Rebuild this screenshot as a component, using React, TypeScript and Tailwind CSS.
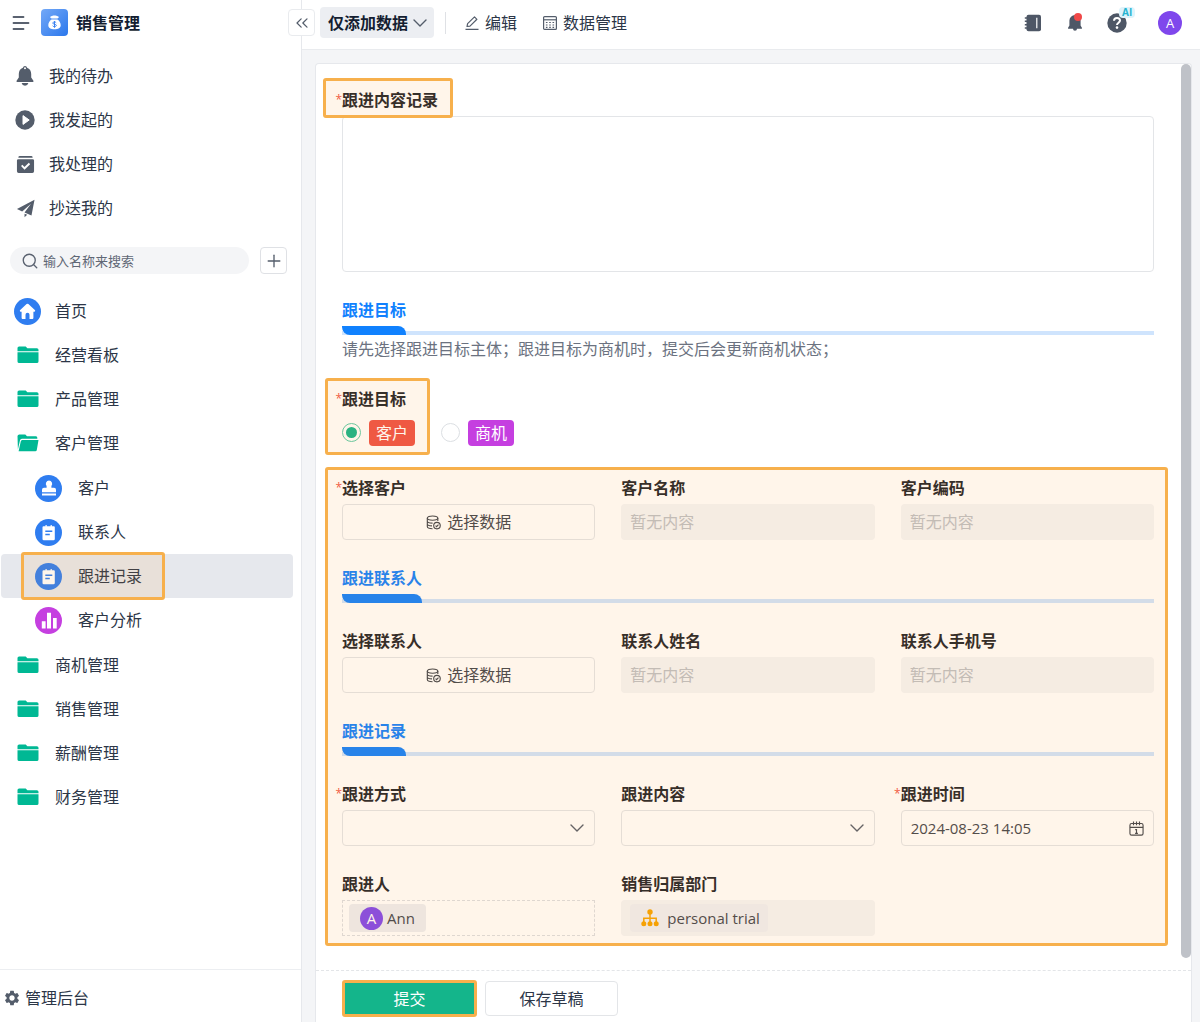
import type { ReactNode } from "react"
import { ChevronsLeft, Plus, Search } from "lucide-react"
import { MdSettings } from "react-icons/md"

type IconProps = { className?: string }

const BellIcon = ({ className }: IconProps) => (
    <svg viewBox="0 0 20 20" fill="currentColor" className={className}>
        <path fillRule="evenodd" d="M10 0a2.200 2.200 0 0 1 2.100 1.700C14.700 2.600 16.200 5 16.200 8v3.600l2.200 3.100c.4.6.1 1.200-.6 1.200H2.200c-.7 0-1-.6-.6-1.200l2.200-3.100V8c0-3 1.500-5.400 4.100-6.300A2.200 2.200 0 0 1 10 0Zm0 1.200a1 1 0 1 0 0 2 1 1 0 0 0 0-2Z" />
        <path d="M6.600 17h6.800a3.500 3.500 0 0 1-6.800 0Z" />
    </svg>
)

const PlayIcon = ({ className }: IconProps) => (
    <svg viewBox="0 0 20 20" className={className}>
        <circle cx="10" cy="10" r="9.7" fill="currentColor" />
        <path d="M8 5.600 14.200 10 8 14.400Z" fill="#fff" stroke="#fff" strokeLinejoin="round" />
    </svg>
)

const DoneIcon = ({ className }: IconProps) => (
    <svg viewBox="0 0 20 20" className={className}>
        <path d="M4 1h12a1.500 1.500 0 0 1 1.500 1.500V3h-15v-.5A1.500 1.500 0 0 1 4 1ZM2.500 4.400h15A1.500 1.500 0 0 1 19 5.900v11.300a1.800 1.800 0 0 1-1.800 1.800H2.800A1.800 1.800 0 0 1 1 17.200V5.900a1.500 1.500 0 0 1 1.500-1.500Z" fill="currentColor" />
        <path d="m6 11 3 3 5.200-5" fill="none" stroke="#fff" strokeWidth="2" />
    </svg>
)

const SendIcon = ({ className }: IconProps) => (
    <svg viewBox="0 0 20 20" fill="currentColor" className={className}>
        <path d="M19.500.8 1 10.600l5.500 2.600L15.800 5 9 14.200l7.300 3.100ZM9 15.400v3.800l2.800-2.600Z" />
    </svg>
)

const FolderIcon = ({ open }: { open?: boolean }) => (
    <svg viewBox="0 0 22 18" fill="#00b894" className="h-[18px] w-[22px]">
        {open ? (
            <path d="M.5 2A1.800 1.800 0 0 1 2.300.5h6l1.700 1.700h9a1.500 1.500 0 0 1 1.300 1.500v1H5a2 2 0 0 0-2 1.600L.9 15.500ZM5.200 5.900h16.300l-1.700 10a1.500 1.500 0 0 1-1.500 1.300H1.600l2.200-10a1.600 1.600 0 0 1 1.400-1.300Z" />
        ) : (
            <path d="M.5 2A1.600 1.600 0 0 1 2.100.4h6.600l1.700 1.800h9.500A1.600 1.600 0 0 1 21.500 3.800v1.400H.5ZM.5 6.200h21v9.200a1.700 1.700 0 0 1-1.700 1.700H2.200A1.700 1.700 0 0 1 .5 15.400Z" />
        )}
    </svg>
)

const HomeIcon = () => (
    <svg viewBox="0 0 27 27" className="size-[27px]">
        <circle cx="13.5" cy="13.5" r="13.5" fill="#2f7df0" />
        <path d="M12.600 6.100a1.400 1.400 0 0 1 1.800 0l6.400 6c.7.7.4 1.600-.5 1.600h-.9v6.100c0 .8-.5 1.300-1.300 1.300h-2.600v-4.300a2 2 0 0 0-4 0v4.300H8.900c-.8 0-1.300-.5-1.300-1.300v-6.100h-.9c-.9 0-1.200-.9-.5-1.600Z" fill="#fff" />
    </svg>
)

const StampIcon = () => (
    <svg viewBox="0 0 27 27" className="size-[27px]">
        <circle cx="13.5" cy="13.5" r="13.5" fill="#2f7df0" />
        <path d="M14 5.600a3.200 3.200 0 0 1 2.400 5.300v1.800h2.600a2 2 0 0 1 2 2v2.600H7v-2.600a2 2 0 0 1 2-2h2.600v-1.800A3.200 3.200 0 0 1 14 5.600ZM7 18.500h14v2H7Z" fill="#fff" />
    </svg>
)

const NoteIcon = () => (
    <svg viewBox="0 0 27 27" className="size-[27px]">
        <circle cx="13.5" cy="13.5" r="13.5" fill="#2f7df0" />
        <path d="M8.500 7.200h2V6h1.200v1.200h3.900V6h1.200v1.200h2a1 1 0 0 1 1 1V20a1.300 1.300 0 0 1-1.300 1.300H8.800A1.300 1.300 0 0 1 7.500 20V8.200a1 1 0 0 1 1-1Z" fill="#fff" />
        <path d="M10.300 12.300h7M10.300 15.500h4.500" stroke="#2f7df0" strokeWidth="1.5" />
    </svg>
)

const ChartIcon = () => (
    <svg viewBox="0 0 27 27" className="size-[27px]">
        <circle cx="13.5" cy="13.5" r="13.5" fill="#c53fe0" />
        <path d="M6.800 14.200h3.800v7.300H6.800ZM12 5.800h4v15.700h-4ZM18 11h3.700v10.500H18Z" fill="#fff" />
    </svg>
)

const DatabaseIcon = () => (
    <svg viewBox="0 0 16 16" fill="none" stroke="currentColor" strokeWidth="1.2" className="size-[15px]">
        <ellipse cx="7" cy="3.3" rx="5.6" ry="2.3" />
        <path d="M1.400 3.300v9c0 1.200 2.400 2.300 5.600 2.300M12.600 3.300v3.200M1.400 6.300c0 1.300 2.500 2.300 5.600 2.300M1.400 9.300c0 1.300 2.200 2.300 5 2.300" />
        <circle cx="11.7" cy="11.3" r="3.5" />
        <path d="m10.200 11.400 1.100 1.100 2-2.200" />
    </svg>
)

const OrgIcon = () => (
    <svg viewBox="0 0 18 18" className="size-[18px]" fill="#f5a300">
        <circle cx="9" cy="3" r="2.7" />
        <circle cx="2.8" cy="14.8" r="2.5" />
        <circle cx="9" cy="14.8" r="2.5" />
        <circle cx="15.2" cy="14.8" r="2.5" />
        <path d="M9 3v11M2.800 14V9.300h12.400V14" fill="none" stroke="#f5a300" strokeWidth="1.5" />
    </svg>
)

const CalendarIcon = () => (
    <svg viewBox="0 0 16 16" fill="none" stroke="currentColor" strokeWidth="1.2" className="size-[15px] shrink-0">
        <rect x="1" y="2.6" width="14" height="12.4" rx="1.8" />
        <path d="M1 6.800h14M4.800.5v4M8 .5v4M11.200.5v4M6.600 9.200H8v4M6.500 13.200h3" />
    </svg>
)

const ArrowDown = ({ className = "" }: IconProps) => (
    <svg viewBox="0 0 14 8" fill="none" stroke="#545d6b" strokeWidth="1.4" strokeLinecap="round" strokeLinejoin="round" className={`h-2 w-[14px] ${className}`}>
        <path d="m1 1 6 6 6-6" />
    </svg>
)

// Tinted frame that points out one region of the form
const Highlight = ({ className = "" }: IconProps) => (
    <span aria-hidden="true" className={`pointer-events-none absolute z-10 rounded-[3px] border-[3px] border-[#f7b04c] bg-[#ff9b2d]/10 ${className}`} />
)

const shortcuts = [
    { name: "我的待办", icon: <BellIcon className="size-5" /> },
    { name: "我发起的", icon: <PlayIcon className="size-5" /> },
    { name: "我处理的", icon: <DoneIcon className="size-[19px]" /> },
    { name: "抄送我的", icon: <SendIcon className="size-[19px]" /> },
]

const children = [
    { name: "客户", icon: <StampIcon /> },
    { name: "联系人", icon: <NoteIcon /> },
    { name: "跟进记录", icon: <NoteIcon />, active: true },
    { name: "客户分析", icon: <ChartIcon /> },
]

const menu = [
    { name: "首页", icon: <HomeIcon /> },
    { name: "经营看板", icon: <FolderIcon /> },
    { name: "产品管理", icon: <FolderIcon /> },
    { name: "客户管理", icon: <FolderIcon open />, children },
    { name: "商机管理", icon: <FolderIcon /> },
    { name: "销售管理", icon: <FolderIcon /> },
    { name: "薪酬管理", icon: <FolderIcon /> },
    { name: "财务管理", icon: <FolderIcon /> },
]

function Sidebar() {
    return (
        <aside className="flex w-[302px] shrink-0 flex-col border-r border-[#e6e8ec] bg-white">
            <div className="flex h-[45px] items-center pl-3">
                <button aria-label="菜单" className="flex">
                    <svg viewBox="0 0 18 18" stroke="#5a6270" strokeWidth="1.8" strokeLinecap="round" className="size-[18px]">
                        <path d="M1.500 3h10M1.500 9h15M1.500 15h10" />
                    </svg>
                </button>
                <svg viewBox="0 0 27 27" className="ml-[11px] size-[27px]">
                    <defs>
                        <linearGradient id="logo" x1="0" y1="0" x2="1" y2="1">
                            <stop offset="0" stopColor="#74a9f7" />
                            <stop offset="1" stopColor="#2b77ec" />
                        </linearGradient>
                    </defs>
                    <rect width="27" height="27" rx="4" fill="url(#logo)" />
                    <path d="M10.200 7.200c1-.3 1.700-.8 3.300-.8s2.300.5 3.300.8c1 .3 1.200 1.300.4 1.900l-.9.500h-5.600l-.9-.5c-.8-.6-.6-1.600.4-1.900ZM10.600 10.500h5.800c2 1.200 3.300 3.500 3.300 5.700 0 2.800-2.500 4-6.200 4s-6.200-1.200-6.200-4c0-2.200 1.300-4.500 3.300-5.700Z" fill="#fff" />
                    <path d="M15.200 13.800c-.3-.6-.9-.8-1.700-.8-1 0-1.700.4-1.700 1.100 0 1.600 3.500.7 3.500 2.400 0 .8-.8 1.200-1.800 1.200-.9 0-1.600-.3-1.800-1M13.500 12v6.700" fill="none" stroke="#3b82f0" strokeWidth="1" />
                </svg>
                <h1 className="ml-2 font-bold text-[#141e31]">销售管理</h1>
            </div>
            <nav className="pt-[9px]">
                {shortcuts.map((s) => (
                    <a key={s.name} href="#" className="flex h-11 items-center pl-[15px]">
                        <span className="flex w-5 justify-center text-[#545d6b]">{s.icon}</span>
                        <span className="ml-[14px]">{s.name}</span>
                    </a>
                ))}
            </nav>
            <div className="mt-[17px] flex items-center gap-[11px] pr-[14px] pl-[10px]">
                <label className="flex h-[27px] flex-1 items-center gap-1 rounded-full bg-[#f4f5f7] px-[11px]">
                    <Search className="size-[18px] shrink-0 text-[#5a6270]" strokeWidth={1.8} />
                    <input aria-label="搜索" placeholder="输入名称来搜索" className="w-full min-w-0 bg-transparent text-[13px] outline-none placeholder:text-[#5f6775]" />
                </label>
                <button aria-label="新增" className="flex size-[27px] items-center justify-center rounded border border-[#dfe1e5]">
                    <Plus className="size-5 text-[#545d6b]" strokeWidth={1.6} />
                </button>
            </div>
            <ul className="mt-[15px] flex-1">
                {menu.map((m) => (
                    <li key={m.name}>
                        <a href="#" className="flex h-11 items-center pl-[14px]">
                            <span className="flex w-[27px] justify-center">{m.icon}</span>
                            <span className="ml-[14px]">{m.name}</span>
                        </a>
                        {m.children && (
                            <ul className="py-px">
                                {m.children.map((c) => (
                                    <li key={c.name} className="relative pr-2 pl-px">
                                        <a href="#" className={`flex h-11 items-center rounded pl-[34px] ${c.active ? "bg-[#e6e8ed]" : ""}`}>
                                            {c.icon}
                                            <span className="ml-4">{c.name}</span>
                                        </a>
                                        {c.active && <Highlight className="-top-0.5 left-[21px] h-12 w-36" />}
                                    </li>
                                ))}
                            </ul>
                        )}
                    </li>
                ))}
            </ul>
            <a href="#" className="flex h-[53px] items-center gap-1 border-t border-[#eceef1] pt-[3px] pl-[3px]">
                <MdSettings className="size-[18px] text-[#545d6b]" />
                管理后台
            </a>
        </aside>
    )
}

function Header() {
    return (
        <header className="relative flex h-[50px] items-center border-b border-[#e9ebee] bg-white pr-[18px] pb-1 pl-[18px]">
            <button aria-label="收起" className="absolute top-[9px] -left-[14px] flex size-[27px] items-center justify-center rounded border border-[#e9ebee] bg-white">
                <ChevronsLeft className="size-5 text-[#545d6b]" strokeWidth={1.5} />
            </button>
            <button className="flex h-[31px] items-center gap-[5px] rounded bg-[#eceef2] pr-[7px] pl-2 font-bold text-[#141e31]">
                仅添加数据
                <ArrowDown />
            </button>
            <span className="ml-[11px] h-[22px] w-px bg-[#dfe1e5]" />
            <button className="ml-[19px] flex items-center gap-1.5">
                <svg viewBox="0 0 14 14" fill="none" stroke="#545d6b" strokeWidth="1.2" className="size-[14px]">
                    <path d="M.5 13.300h13M2 10.500 2.600 7.600 9.500.9l2.400 2.400L5 10.100Z" strokeLinejoin="round" />
                </svg>
                编辑
            </button>
            <button className="ml-[26px] flex items-center gap-1.5">
                <svg viewBox="0 0 14 14" fill="none" stroke="#545d6b" strokeWidth="1.2" className="size-[14px]">
                    <rect x=".6" y=".6" width="12.8" height="12.8" rx="1" />
                    <path d="M.6 3.800h12.800" />
                    <path d="M2.900 6.500h9M2.900 9h9M2.900 11.300h9" strokeDasharray="1.6 1.7" />
                </svg>
                数据管理
            </button>
            <div className="ml-auto flex items-center text-[#4e5766]">
                <button aria-label="通讯录">
                    <svg viewBox="0 0 18 18" className="size-[18px]">
                        <rect x="2.5" y=".8" width="14.5" height="16.4" rx="2" fill="currentColor" />
                        <path d="M.8 4h3M.8 7.300h3M.8 10.700h3M.8 14h3" stroke="currentColor" strokeWidth="1.5" />
                        <path d="M12.800 3.800v10.400" stroke="#fff" strokeWidth="1.2" />
                    </svg>
                </button>
                <button aria-label="通知" className="relative ml-6">
                    <svg viewBox="0 0 18 18" fill="currentColor" className="size-[18px]">
                        <path d="M9 1a5.600 5.600 0 0 1 5.600 5.600v5l1.300 2.200c.3.500 0 1-.6 1H11a2 2 0 0 1-4 0H2.700c-.6 0-.9-.5-.6-1l1.300-2.200v-5A5.600 5.600 0 0 1 9 1Z" />
                    </svg>
                    <span className="absolute -top-px right-0.5 size-2 rounded-full bg-[#f04848]" />
                </button>
                <button aria-label="帮助" className="relative ml-[23px]">
                    <svg viewBox="0 0 20 20" className="size-5">
                        <circle cx="10" cy="10" r="9.7" fill="currentColor" />
                        <path d="M7 7.800C7 6 8.200 5 10 5s3 1 3 2.600c0 2-3 2.200-3 4.400" fill="none" stroke="#fff" strokeWidth="2" />
                        <circle cx="10" cy="14.6" r="1.3" fill="#fff" />
                    </svg>
                    <span className="absolute -top-1.5 left-3 rounded-sm bg-[#def3fb] px-[3px] text-[10px] leading-[11px] font-bold text-[#26b3d0]">AI</span>
                </button>
                <span className="ml-[31px] flex size-6 items-center justify-center rounded-full bg-[#7f47ec] text-[13px] text-white">A</span>
            </div>
        </header>
    )
}

type FieldProps = { id: string; label: string; required?: boolean; children: ReactNode }

const Required = () => <span className="absolute right-full text-xs leading-6 font-normal text-[#f05545]">*</span>

const Field = ({ id, label, required, children }: FieldProps) => (
    <div className="flex flex-col gap-1">
        <label htmlFor={id} className="relative font-bold text-[#1f2329]">
            {required && <Required />}
            {label}
        </label>
        {children}
    </div>
)

const PickButton = ({ id }: { id: string }) => (
    <button id={id} type="button" className="flex h-9 items-center justify-center gap-1.5 rounded border border-[#e3e5e8] text-[#3f444d]">
        <DatabaseIcon />
        选择数据
    </button>
)

const EmptyInput = ({ id }: { id: string }) => (
    <input id={id} readOnly placeholder="暂无内容" className="h-9 w-full rounded-sm bg-[#f4f5f7] px-[9px] outline-none placeholder:text-[#bdc0c5]" />
)

const SelectBox = ({ id }: { id: string }) => (
    <div className="relative">
        <select id={id} className="block h-9 w-full appearance-none rounded border border-[#e3e5e8] px-2">
            <option value=""></option>
        </select>
        <ArrowDown className="pointer-events-none absolute top-[14px] right-[11px]" />
    </div>
)

const SectionTitle = ({ title }: { title: string }) => (
    <div className="border-b-4 border-[#cfe4fd]">
        <h2 className="w-fit font-bold text-[#1081fe]">
            {title}
            <span className="mt-1 -mb-1 block h-[9px] rounded-tr-lg rounded-bl-lg bg-[#1081fe]" />
        </h2>
    </div>
)

const Columns = ({ children }: { children: ReactNode }) => (
    <div className="grid grid-cols-3 gap-[26px]">{children}</div>
)

function RecordForm() {
    return (
        <form id="record" className="flex flex-1 flex-col gap-[26px] pt-6 pr-[27px] pb-[34px] pl-[26px]">
            <div className="relative">
                <Field id="content" label="跟进内容记录" required>
                    <textarea id="content" className="block h-[156px] w-full resize-none rounded border border-[#e3e5e8] p-2 outline-none" />
                </Field>
                <Highlight className="-top-[10px] -left-[19px] h-10 w-[130px]" />
            </div>
            <div>
                <SectionTitle title="跟进目标" />
                <p className="mt-0.5 text-[#6b7280]">请先选择跟进目标主体；跟进目标为商机时，提交后会更新商机状态；</p>
            </div>
            <div role="radiogroup" aria-labelledby="target-label" className="relative">
                <div id="target-label" className="relative font-bold text-[#1f2329]">
                    <Required />
                    跟进目标
                </div>
                <div className="mt-1 flex h-[35px] items-center">
                    <label className="flex items-center gap-2">
                        <input type="radio" name="target" defaultChecked className="size-[19px] appearance-none rounded-full border border-[#5cccaa] bg-[#12b58b] bg-clip-content p-[3px]" />
                        <span className="rounded bg-[#ee5246] px-[7px] leading-[26px] text-white">客户</span>
                    </label>
                    <label className="ml-[26px] flex items-center gap-2">
                        <input type="radio" name="target" className="size-[19px] appearance-none rounded-full border border-[#dcdfe3]" />
                        <span className="rounded bg-[#c53fe0] px-[7px] leading-[26px] text-white">商机</span>
                    </label>
                </div>
                <Highlight className="-top-[9px] -left-[17px] h-[77px] w-[105px]" />
            </div>
            <div className="relative flex flex-col gap-[26px]">
                <Columns>
                    <Field id="customer" label="选择客户" required><PickButton id="customer" /></Field>
                    <Field id="customer-name" label="客户名称"><EmptyInput id="customer-name" /></Field>
                    <Field id="customer-code" label="客户编码"><EmptyInput id="customer-code" /></Field>
                </Columns>
                <SectionTitle title="跟进联系人" />
                <Columns>
                    <Field id="contact" label="选择联系人"><PickButton id="contact" /></Field>
                    <Field id="contact-name" label="联系人姓名"><EmptyInput id="contact-name" /></Field>
                    <Field id="contact-phone" label="联系人手机号"><EmptyInput id="contact-phone" /></Field>
                </Columns>
                <SectionTitle title="跟进记录" />
                <Columns>
                    <Field id="method" label="跟进方式" required><SelectBox id="method" /></Field>
                    <Field id="topic" label="跟进内容"><SelectBox id="topic" /></Field>
                    <Field id="time" label="跟进时间" required>
                        <div className="flex h-9 items-center rounded border border-[#e3e5e8] px-[9px] text-[#3f444d]">
                            <input id="time" defaultValue="2024-08-23 14:05" className="w-full min-w-0 bg-transparent text-[15px] outline-none" />
                            <CalendarIcon />
                        </div>
                    </Field>
                    <Field id="owner" label="跟进人">
                        <div id="owner" className="flex h-9 items-center border border-dashed border-[#dcdee2] px-1.5">
                            <span className="flex h-7 items-center gap-1 rounded-sm bg-[#eceef2] px-[11px] text-[15px] text-[#3f444d]">
                                <span className="flex size-[23px] items-center justify-center rounded-full bg-[#7f47ec] text-white">A</span>
                                Ann
                            </span>
                        </div>
                    </Field>
                    <Field id="department" label="销售归属部门">
                        <div id="department" className="flex h-9 items-center rounded-sm bg-[#f4f5f7] px-[9px]">
                            <span className="flex h-7 items-center gap-2 rounded bg-[#eff0f4] pr-2 pl-[11px] text-[15px] text-[#3f444d]">
                                <OrgIcon />
                                personal trial
                            </span>
                        </div>
                    </Field>
                </Columns>
                <Highlight className="-top-[9px] -right-[14px] -bottom-[10px] -left-[17px]" />
            </div>
        </form>
    )
}

export default function App() {
    return (
        <div className="flex min-h-screen bg-[#f4f5f7] font-['Open_Sans','Noto_Sans_CJK_SC',sans-serif] text-base leading-6 text-[#2c3647]">
            <Sidebar />
            <div className="flex min-w-0 flex-1 flex-col">
                <Header />
                <main className="flex flex-1 flex-col pt-[13px] pr-2 pl-[13px]">
                    <div className="flex flex-1 flex-col rounded-t border border-b-0 border-[#e6e8ec] bg-white">
                        <div className="flex">
                            <RecordForm />
                            <div className="mb-3 w-[10px] rounded-full bg-[#bfc2c8]" />
                        </div>
                        <div className="flex items-center gap-2 border-t border-dashed border-[#e3e5e8] pt-[9px] pb-[5px] pl-[26px]">
                            <button type="submit" form="record" className="h-[37px] w-[135px] rounded-[3px] border-[3px] border-[#f7b04c] bg-[#14b58b] text-white">提交</button>
                            <button type="button" className="h-[35px] w-[133px] rounded border border-[#e3e5e8]">保存草稿</button>
                        </div>
                    </div>
                </main>
            </div>
        </div>
    )
}
